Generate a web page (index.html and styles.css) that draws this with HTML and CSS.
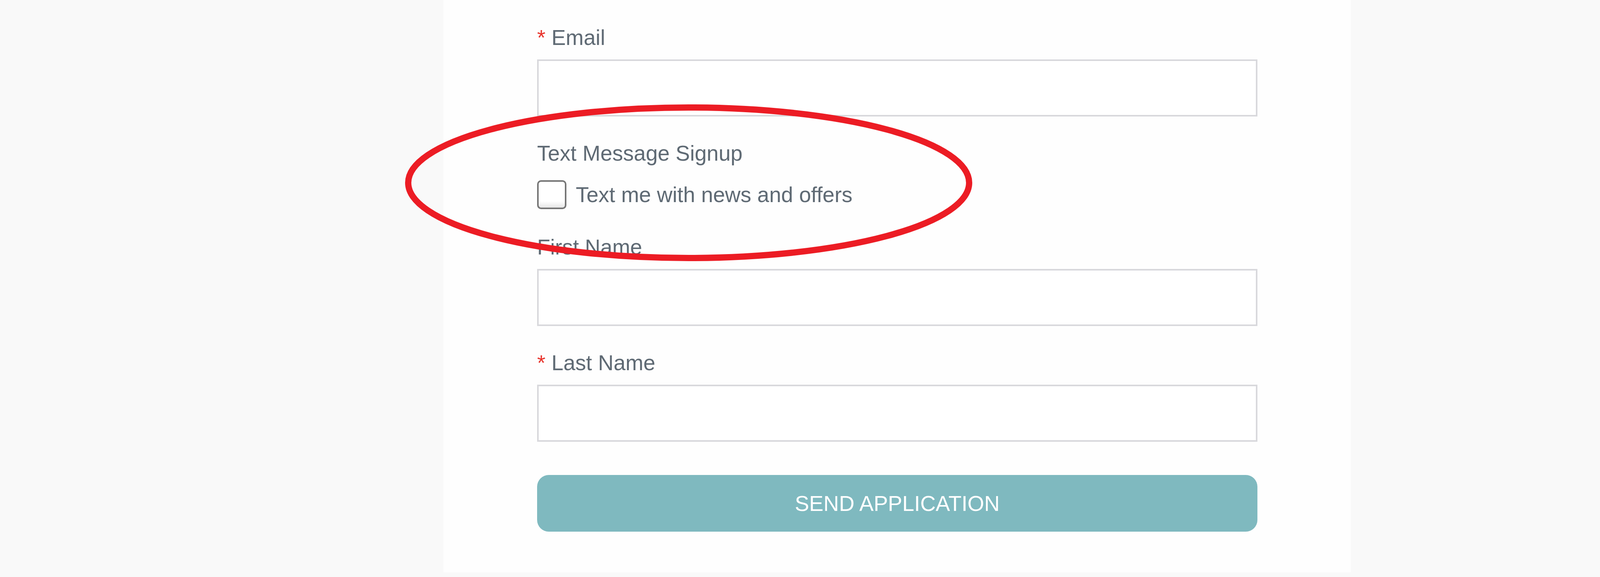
FILE: index.html
```html
<!DOCTYPE html>
<html lang="en">
<head>
<meta charset="utf-8">
<title>Application form</title>
<link rel="stylesheet" href="styles.css">
</head>
<body>
<div class="page">
  <div class="card">
    <form class="form">
      <div class="field">
        <label class="label"><span class="req">*</span> Email</label>
        <input class="input" type="text">
      </div>
      <div class="field field-signup">
        <div class="label label-signup">Text Message Signup</div>
        <label class="check-row">
          <span class="checkbox"></span>
          <span class="check-text">Text me with news and offers</span>
        </label>
      </div>
      <div class="field">
        <label class="label">First Name</label>
        <input class="input" type="text">
      </div>
      <div class="field field-last">
        <label class="label"><span class="req">*</span> Last Name</label>
        <input class="input" type="text">
      </div>
      <button class="submit" type="button">SEND APPLICATION</button>
    </form>
  </div>
  <svg class="annotation" width="1500" height="440" viewBox="0 0 1500 440">
    <ellipse cx="743" cy="217.5" rx="718" ry="192.5" fill="none" stroke="#ec1c24" stroke-width="16"/>
  </svg>
</div>
</body>
</html>
```
FILE: styles.css
```css
html, body {
  margin: 0;
  padding: 0;
}
body {
  background: #f9f9f9;
  font-family: "Liberation Sans", Arial, sans-serif;
  font-size: 55px;
  color: #5f6a74;
}
.page {
  position: relative;
}
.card {
  margin-left: 1135px;
  width: 2323px;
  background: #fefefe;
  box-sizing: border-box;
  padding: 64px 0 104px 240px;
}
.form {
  width: 1844px;
  display: flex;
  flex-direction: column;
}
.field {
  display: flex;
  flex-direction: column;
  margin-bottom: 62px;
}
.field-signup {
  margin-bottom: 65px;
}
.field-last {
  margin-bottom: 85px;
}
.label {
  display: block;
  line-height: 64px;
  height: 64px;
  margin-bottom: 24px;
  white-space: nowrap;
}
.label-signup {
  margin-bottom: 37px;
}
.req {
  color: #e8352d;
}
.input {
  display: block;
  width: 1844px;
  height: 146px;
  box-sizing: border-box;
  border: 4px solid #d8d8dc;
  border-radius: 0;
  background: #ffffff;
  margin: 0;
  padding: 0 20px;
  font: inherit;
  outline: none;
}
.check-row {
  display: flex;
  align-items: center;
  height: 74px;
}
.checkbox {
  width: 75px;
  height: 74px;
  box-sizing: border-box;
  border: 4px solid #767676;
  border-radius: 10px;
  background: linear-gradient(#ffffff 75%, #e6e6e6);
  flex: none;
}
.check-text {
  margin-left: 24px;
  line-height: 64px;
  white-space: nowrap;
}
.submit {
  display: block;
  width: 1844px;
  height: 145px;
  margin: 0;
  border: none;
  border-radius: 30px;
  background: #7fb9bf;
  color: #ffffff;
  font: inherit;
  font-size: 55px;
  line-height: 64px;
  padding: 0;
  cursor: pointer;
}
.annotation {
  position: absolute;
  left: 1020px;
  top: 250px;
  pointer-events: none;
}
```
